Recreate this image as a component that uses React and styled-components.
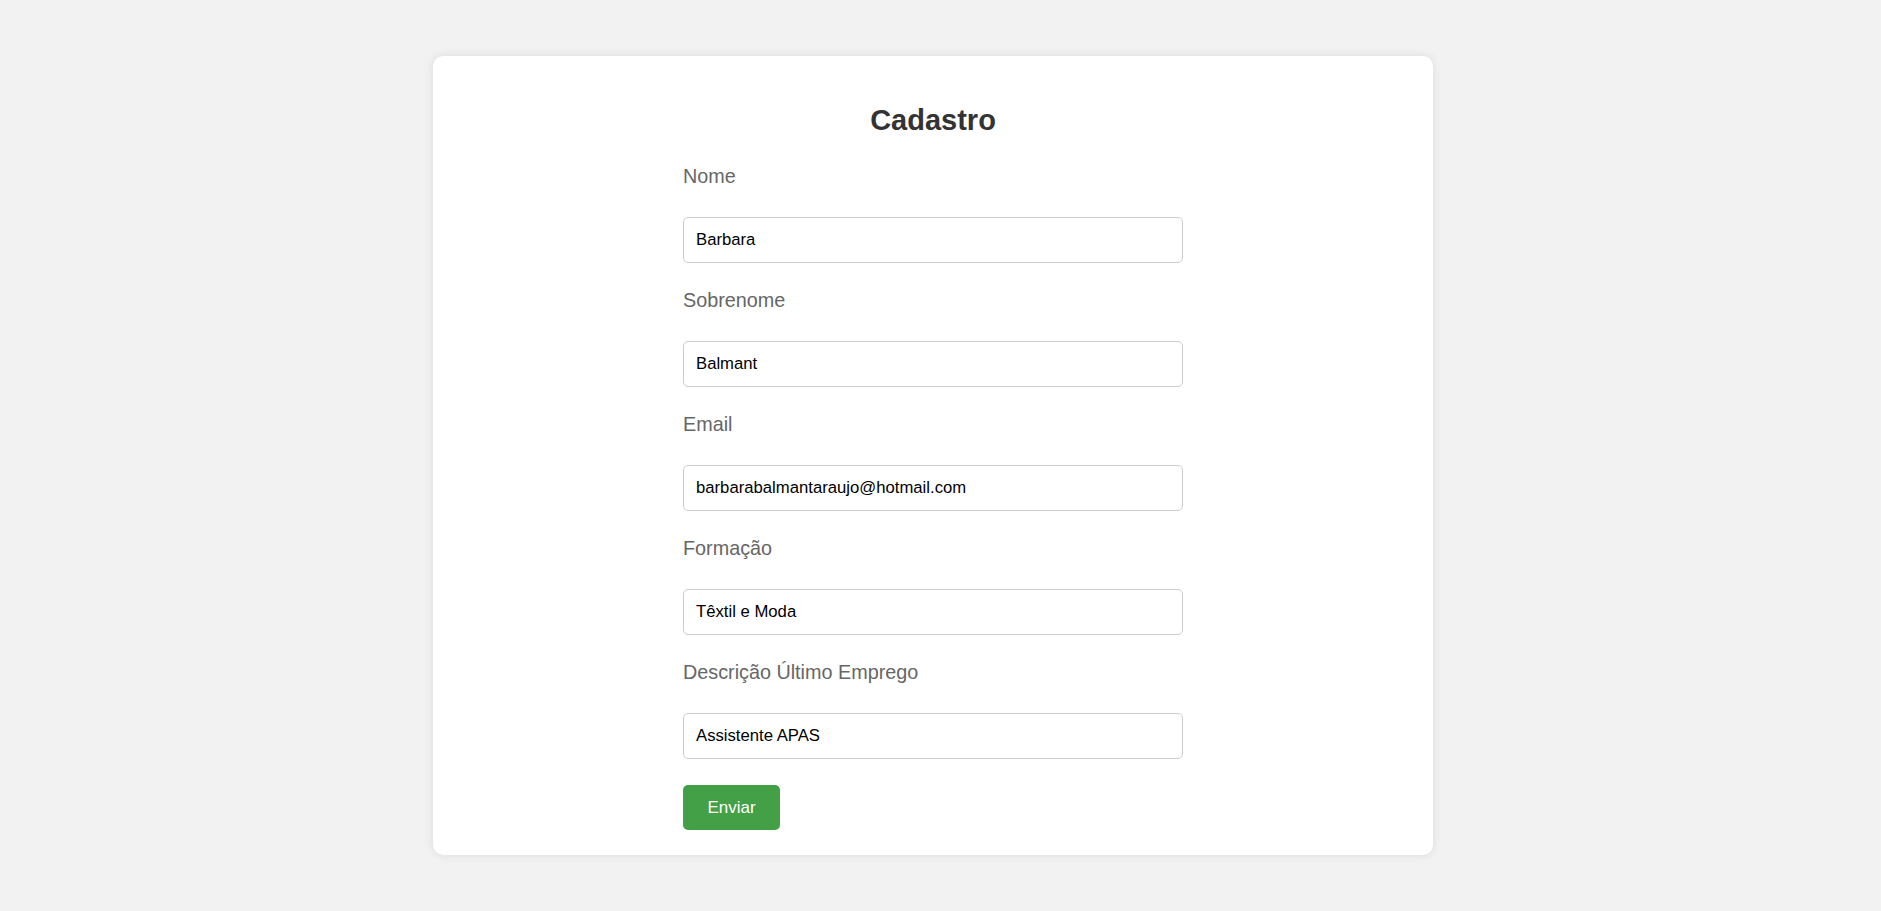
import React from 'react'
import styled, {createGlobalStyle} from 'styled-components'

const fields = [
    {label: 'Nome', value: 'Barbara'},
    {label: 'Sobrenome', value: 'Balmant'},
    {label: 'Email', value: 'barbarabalmantaraujo@hotmail.com'},
    {label: 'Formação', value: 'Têxtil e Moda'},
    {label: 'Descrição Último Emprego', value: 'Assistente APAS'},
]

const App = () => {
    return (
        <>
            <GlobalStyle />
            <Page>
                <Card>
                    <Title>Cadastro</Title>
                    <Form onSubmit={e => e.preventDefault()}>
                        {fields.map((item, index) => (
                            <Field key={index}>
                                <Label htmlFor={`f${index}`}>{item.label}</Label>
                                <Input id={`f${index}`} type="text" defaultValue={item.value} />
                            </Field>
                        ))}
                        <Button type="submit">Enviar</Button>
                    </Form>
                </Card>
            </Page>
        </>
    )
}

export default App

const GlobalStyle = createGlobalStyle`
    * {
        box-sizing: border-box;
    }
    body {
        margin: 0;
        background: #f2f2f2;
        font-family: "Liberation Sans", Arial, sans-serif;
    }
`

const Page = styled.div`
    display: flex;
    justify-content: center;
    padding: 56px 15px 40px 0;
`

const Card = styled.div`
    width: 1000px;
    background: #fff;
    border-radius: 10px;
    box-shadow: 0 0 10px rgba(0, 0, 0, 0.1);
    padding: 48px 0 25px;
`

const Title = styled.h2`
    margin: 0 0 28px;
    text-align: center;
    font-size: 29px;
    font-weight: bold;
    color: #333;
`

const Form = styled.form`
    width: 500px;
    margin: 0 auto;
`

const Field = styled.div`
    display: flex;
    flex-direction: column;
    margin-bottom: 26px;
`

const Label = styled.label`
    font-size: 19.8px;
    line-height: 23px;
    color: #666;
    margin-bottom: 29px;
`

const Input = styled.input`
    width: 100%;
    height: 46px;
    padding: 0 12px;
    border: 1px solid #ccc;
    border-radius: 5px;
    font-family: "Liberation Sans", Arial, sans-serif;
    font-size: 16.7px;
    color: #000;
    background: #fff;
    outline: none;
`

const Button = styled.button`
    display: block;
    width: 97px;
    height: 45px;
    border: none;
    border-radius: 5px;
    background: #43a047;
    color: #fff;
    font-family: "Liberation Sans", Arial, sans-serif;
    font-size: 17px;
    cursor: pointer;
`
